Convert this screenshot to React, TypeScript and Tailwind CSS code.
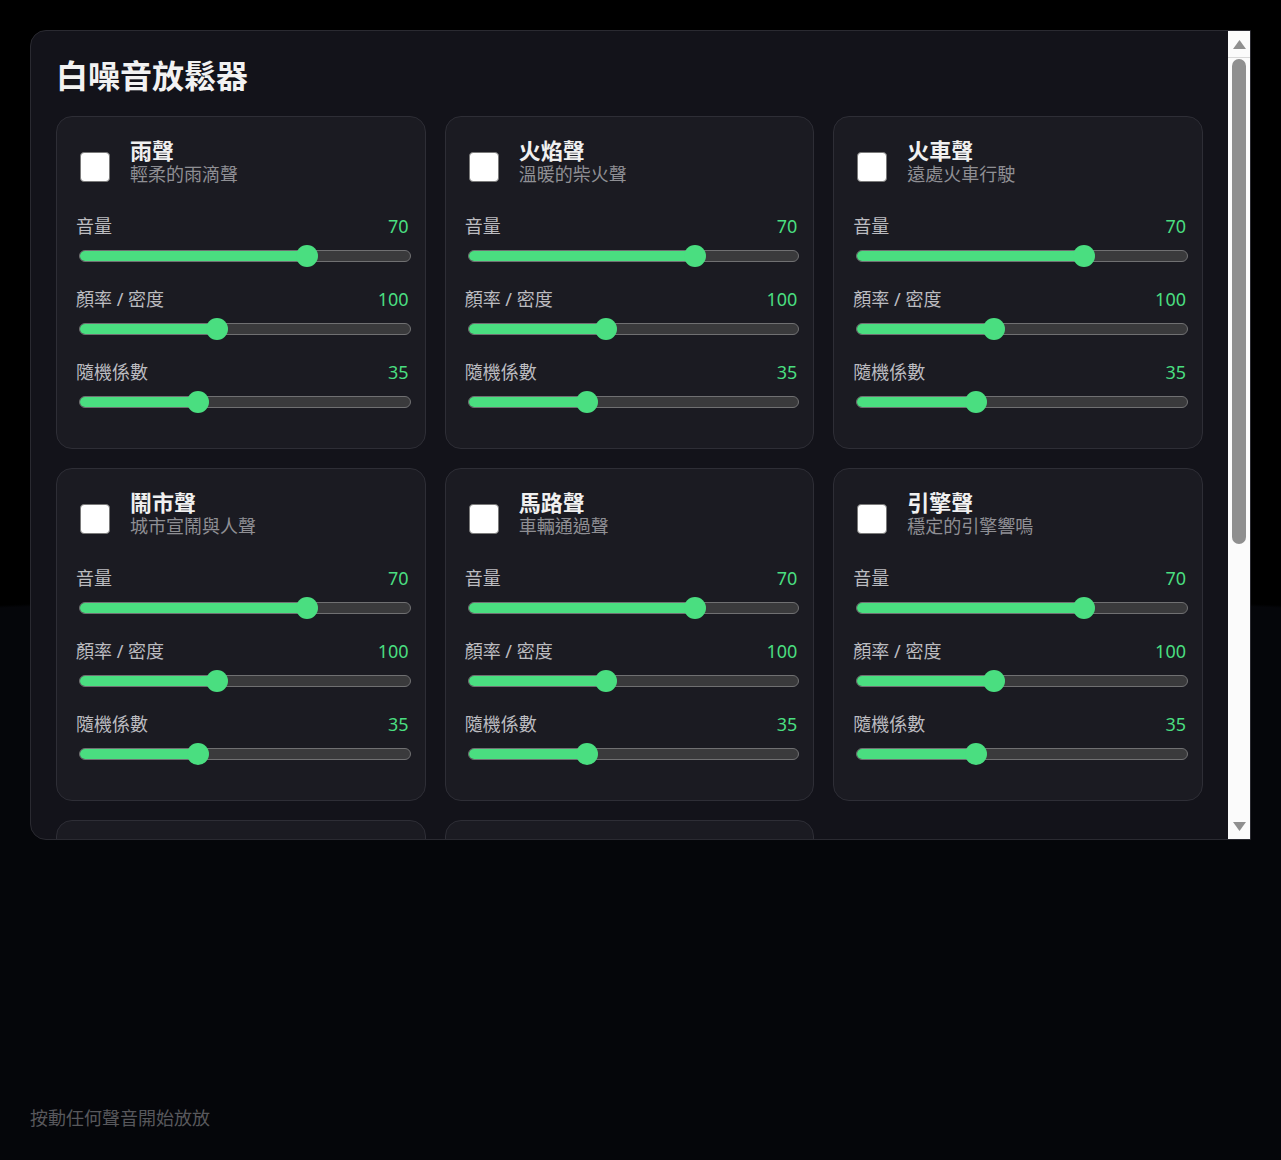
import React from "react";

type Sound = { name: string; desc: string };

const sounds: Sound[] = [
  { name: "雨聲", desc: "輕柔的雨滴聲" },
  { name: "火焰聲", desc: "溫暖的柴火聲" },
  { name: "火車聲", desc: "遠處火車行駛" },
  { name: "鬧市聲", desc: "城市宣鬧與人聲" },
  { name: "馬路聲", desc: "車輛通過聲" },
  { name: "引擎聲", desc: "穩定的引擎響鳴" },
  { name: "海浪聲", desc: "拍岸的海浪" },
  { name: "風聲", desc: "呼嘯的風" },
];

const controls = [
  { label: "音量", value: 70, pct: 0.7 },
  { label: "顏率 / 密度", value: 100, pct: 0.41 },
  { label: "隨機係數", value: 35, pct: 0.35 },
];

function Slider({ pct }: { pct: number }) {
  // thumb travels inside the track, fill ends at thumb centre
  const left = `calc(11px + (100% - 22px) * ${pct})`;
  return (
    <div className="relative h-6 ml-[3px] -mr-[2px] flex items-center">
      <div className="relative w-full h-3 rounded-full bg-[#3a3a3c] border border-[#707072] overflow-hidden">
        <div className="absolute inset-y-0 left-0 bg-[#4ade80]" style={{ width: left }} />
      </div>
      <div
        className="absolute top-[1px] w-[22px] h-[22px] -ml-[11px] rounded-full bg-[#4ade80]"
        style={{ left }}
      />
    </div>
  );
}

function SoundCard({ sound }: { sound: Sound }) {
  return (
    <div className="rounded-2xl border border-[#2e2e36] bg-[#1b1b22] pl-[19px] pr-[16px] pt-5 pb-[34px] flex flex-col">
      <div className="flex items-start h-12">
        <div className="mt-[15px] ml-[4px] w-[30px] h-[30px] rounded-[4px] bg-white border border-[#7a7a7a] shrink-0" />
        <div className="ml-5 flex flex-col">
          <div className="text-[22px] leading-[26px] font-bold text-[#f0f0f0]">{sound.name}</div>
          <div className="text-[18px] leading-[22px] text-[#8f8f94]">{sound.desc}</div>
        </div>
      </div>
      <div className="mt-[30px] flex flex-col gap-5">
        {controls.map((c) => (
          <div key={c.label} className="flex flex-col">
            <div className="flex justify-between items-center h-[22px] text-[18px] leading-[22px]">
              <span className="text-[#bcbcc0]">{c.label}</span>
              <span className="text-[#4ade80]">{c.value}</span>
            </div>
            <div className="mt-[7px]">
              <Slider pct={c.pct} />
            </div>
          </div>
        ))}
      </div>
    </div>
  );
}

function FakeScrollbar() {
  return (
    <div className="w-[22px] shrink-0 bg-[#fbfbfb] flex flex-col items-center">
      <div className="h-[27px] w-full flex items-center justify-center border-b border-[#d8d8d8]">
        <svg width="15" height="11" viewBox="0 0 15 11">
          <path d="M7.5 1 L14 10 L1 10 Z" fill="#8f8f8f" />
        </svg>
      </div>
      <div className="mt-[1px] w-[14px] h-[485px] rounded-full bg-[#8f8f8f]" />
      <div className="flex-1" />
      <div className="h-[26px] w-full flex items-center justify-center">
        <svg width="15" height="11" viewBox="0 0 15 11">
          <path d="M1 1 L14 1 L7.5 10 Z" fill="#8f8f8f" />
        </svg>
      </div>
    </div>
  );
}

export default function App() {
  return (
    <div
      className="min-h-screen flex flex-col justify-between p-[30px] bg-[radial-gradient(ellipse_3000px_568px_at_50%_100%,#05060a_99.5%,#000_100%)]"
      style={{ fontFamily: '"Noto Sans", "Noto Sans CJK TC", sans-serif' }}
    >
      <div className="h-[810px] flex rounded-l-2xl border border-[#2a2a31] bg-[#13131a]">
        <div className="flex-1 min-w-0 overflow-y-auto rounded-l-2xl [scrollbar-width:none]">
          <div className="pt-[26px] px-[25px] pb-[160px]">
            <h1 className="text-[32px] leading-[38px] font-bold text-[#f2f2f2] mb-[21px]">白噪音放鬆器</h1>
            <div className="grid grid-cols-3 gap-[19px]">
              {sounds.map((s) => (
                <SoundCard key={s.name} sound={s} />
              ))}
            </div>
          </div>
        </div>
        <FakeScrollbar />
      </div>
      <p className="text-[18px] leading-6 text-[#58585c]">按動任何聲音開始放放</p>
    </div>
  );
}
